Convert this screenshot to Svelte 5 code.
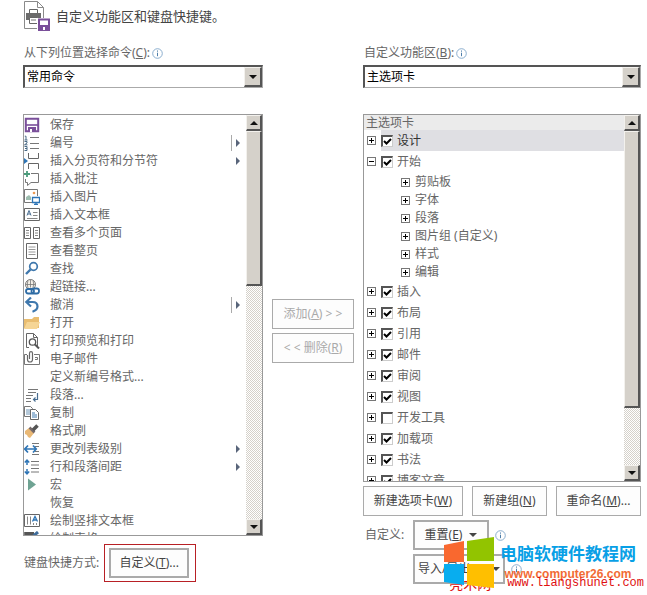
<script lang="ts">
	interface Command {
		label: string;
		icon: string;
		menu?: 'plain' | 'split';
	}

	interface Tab {
		label: string;
		checked: boolean;
		open?: boolean;
		groups?: string[];
	}

	const icons: Record<string, string> = {
		none: '',
		save: '<path d="M1.8 1.8h12.4v12.4H1.8z" fill="none" stroke="#7a4f9a" stroke-width="2"/><path d="M2 8h12" stroke="#7a4f9a" stroke-width="1.6"/><path d="M4 10h8v5H4z" fill="#7a4f9a"/><path d="M6 12h2v3H6z" fill="#fff"/>',
		numbering: '<path d="M6 2.5h9M6 8.5h9M6 13.5h9" stroke="#777" fill="none"/><path d="M.8 1.200h1.200V5M.5 5h3M.5 6.500h2.500V8L.5 9.800h3M.5 11.500h2.500v4H.5M1 13.500h2" stroke="#4a6a85" fill="none"/>',
		break: '<path d="M4.500 0v5.500h10V0M4.500 16v-5.500h10V16" fill="none" stroke="#666"/><path d="M0 5l4 3-4 3z" fill="#2e75b6"/>',
		comment: '<path d="M7 2.500h7.500v9H7l-3.500 3v-3h-2V8" fill="none" stroke="#777"/><path d="M3 0v6M0 3h6" stroke="#4b9b7b" stroke-width="1.800"/>',
		picture: '<path d="M8 13.500H.5v-13h13V7" fill="none" stroke="#777"/><path d="M2 11V8l3-2 2 2v3z" fill="#9dbdaf"/><circle cx="10" cy="4" r="1.300" fill="#ed9b54"/><path d="M8.500 8.500h7v5h-7zM12 14v2M10 15.500h4" fill="#fff" stroke="#2e75b6" stroke-width="1.300"/>',
		textbox: '<path d="M.5 1.500h15v12H.5z" fill="none" stroke="#666"/><path d="M3 8.500l2-5 2 5M3.800 7h2.600" fill="none" stroke="#486d91"/><path d="M9 5.500h4.500M9 8.500h4.500M3 11.500h10.500" stroke="#888"/>',
		pages: '<path d="M.5 2.500h6v11h-6zM9.500 2.500h6v11h-6z" fill="none" stroke="#666"/><path d="M2 5.500h3M2 8h3M2 10.500h3M11 5.500h3M11 8h3M11 10.500h3" stroke="#888"/>',
		page: '<path d="M2.500.5h11v15h-11z" fill="none" stroke="#666"/><path d="M4.500 4h7M4.500 6.500h7M4.500 9h7M4.500 11.500h7" stroke="#999"/>',
		find: '<circle cx="9.500" cy="5.500" r="3.800" fill="none" stroke="#3f78ad" stroke-width="1.700"/><path d="M6.500 8.500L2 13" stroke="#3f78ad" stroke-width="2.400"/>',
		link: '<circle cx="6.500" cy="5.500" r="5" fill="#f5f1e8" stroke="#777"/><path d="M1.500 5.500h10M6.500.5v8M4 1.500Q2.500 5 4 9M9 1.500q1.500 3.500 0 7" fill="none" stroke="#777" stroke-width=".8"/><rect x="2" y="10" width="8" height="4.500" rx="2.200" fill="#fff" stroke="#2e6ca5" stroke-width="1.800"/><rect x="7.500" y="9.500" width="7.500" height="5" rx="2.200" fill="none" stroke="#2e6ca5" stroke-width="1.800"/>',
		undo: '<path d="M3 5h5.500c4 0 5 2.500 5 4.500 0 2-1.500 4-5 5.200" fill="none" stroke="#3f78ad" stroke-width="2.200"/><path d="M7 .5L2.300 5 7 9.500" fill="none" stroke="#3f78ad" stroke-width="2.200"/>',
		open: '<path d="M0 4h8l2-2h5v11H0z" fill="#e9bd70"/><path d="M3 7h13l-3 7H0z" fill="#f5d595"/>',
		preview: '<path d="M5 14.500H2.500V.5h7l4 4V15M9.500.5v4h4" fill="none" stroke="#666"/><circle cx="8.500" cy="9" r="3.200" fill="#fff" stroke="#555" stroke-width="1.300"/><path d="M11 11.500l4 4" stroke="#555" stroke-width="2"/>',
		mail: '<path d="M3 3.500H.5v10h15v-10H10" fill="none" stroke="#777"/><path d="M3.500 4v4.500a2.500 2.500 0 0 0 5 0V2.200a1.500 1.500 0 0 0-3 0V8" fill="none" stroke="#666" stroke-width="1.200"/><path d="M11 6.500h2.500v2H11" fill="none" stroke="#777"/>',
		paragraph: '<path d="M4 2.500h10M4 5.500h8M2 8.500h7M2 11.500h5M2 14.500h5" stroke="#777"/><path d="M13.500 6v6.500H10M11.500 10.500l-2 2 2 2" fill="none" stroke="#486d91" stroke-width="1.200"/>',
		copy: '<path d="M.5 1.500h6l2 2v8h-8z" fill="#fff" stroke="#777"/><path d="M2 5h4M2 7h4M2 9h4" stroke="#6d94b5"/><path d="M6.500 4.500h5l3 3v7h-8z" fill="#fff" stroke="#666"/><path d="M8 8h3M8 10h5M8 12h5" stroke="#3f78ad"/>',
		brush: '<path d="M1 8l4-3 5 5-4 5-2-1-1-2-2-1z" fill="#e9b875"/><path d="M5.500 4.500l5 5" stroke="#766b6b" stroke-width="2.500"/><path d="M9 7l4.500-4.500" stroke="#555" stroke-width="3.500"/>',
		level: '<path d="M8 2.500h7M11 5.500h4M11 10.500h4M8 13.500h7" stroke="#777"/><path d="M1 8h11M4 4.500L.8 8 4 11.500M9 4.500L12.200 8 9 11.500" fill="none" stroke="#2e75b6" stroke-width="1.700"/>',
		spacing: '<path d="M7 2.500h8M7 6h8M7 9.500h8M7 13h8" stroke="#777"/><path d="M3 1v5M.8 3.500L3 1.200l2.200 2.300M3 10v5M.8 12.500L3 14.800l2.200-2.300" fill="none" stroke="#2e75b6" stroke-width="1.500"/>',
		macro: '<path d="M4 1.500l8 6-8 6z" fill="#6fa393"/>',
		vertical: '<path d="M.5 1.500h15v12H.5z" fill="none" stroke="#666"/><path d="M3.500 3.500v8M6.500 3.500v8" stroke="#888"/><path d="M8.500 8.500L11 3.500l2.500 5M9.300 7h3.400" fill="none" stroke="#2e75b6" stroke-width="1.300"/><path d="M9.500 10v2M12.500 10v2" stroke="#888"/>',
		table: '<path d="M0 1h10v3H0z" fill="#555"/><path d="M.5 1v14h13V9M0 8.500h8M5.500 4v11" fill="none" stroke="#777"/><path d="M7 7l7-6" stroke="#3f6c9b" stroke-width="3"/>'
	};

	const commands: Command[] = [
		{ label: '保存', icon: 'save' },
		{ label: '编号', icon: 'numbering', menu: 'split' },
		{ label: '插入分页符和分节符', icon: 'break', menu: 'plain' },
		{ label: '插入批注', icon: 'comment' },
		{ label: '插入图片', icon: 'picture' },
		{ label: '插入文本框', icon: 'textbox' },
		{ label: '查看多个页面', icon: 'pages' },
		{ label: '查看整页', icon: 'page' },
		{ label: '查找', icon: 'find' },
		{ label: '超链接...', icon: 'link' },
		{ label: '撤消', icon: 'undo', menu: 'split' },
		{ label: '打开', icon: 'open' },
		{ label: '打印预览和打印', icon: 'preview' },
		{ label: '电子邮件', icon: 'mail' },
		{ label: '定义新编号格式...', icon: 'none' },
		{ label: '段落...', icon: 'paragraph' },
		{ label: '复制', icon: 'copy' },
		{ label: '格式刷', icon: 'brush' },
		{ label: '更改列表级别', icon: 'level', menu: 'plain' },
		{ label: '行和段落间距', icon: 'spacing', menu: 'plain' },
		{ label: '宏', icon: 'macro' },
		{ label: '恢复', icon: 'none' },
		{ label: '绘制竖排文本框', icon: 'vertical' },
		{ label: '绘制表格', icon: 'table' }
	];

	let tabs: Tab[] = $state([
		{ label: '设计', checked: true },
		{ label: '开始', checked: true, open: true, groups: ['剪贴板', '字体', '段落', '图片组 (自定义)', '样式', '编辑'] },
		{ label: '插入', checked: true },
		{ label: '布局', checked: true },
		{ label: '引用', checked: true },
		{ label: '邮件', checked: true },
		{ label: '审阅', checked: true },
		{ label: '视图', checked: true },
		{ label: '开发工具', checked: false },
		{ label: '加载项', checked: true },
		{ label: '书法', checked: true },
		{ label: '博客文章', checked: true }
	]);

	let selectedTab = $state('设计');
</script>

{#snippet info()}
	<svg class="info" viewBox="0 0 11 11" aria-hidden="true">
		<circle cx="5.5" cy="5.5" r="4.8" fill="#fff" stroke="#7fa6c9" stroke-width=".9" />
		<path d="M5.500 4.700v3.500M5.500 2.500v1.200" stroke="#4f7faa" />
	</svg>
{/snippet}

{#snippet scrollbar(thumb: number)}
	<div class="scrollbar">
		<button class="scroll-button" aria-label="向上滚动"><span class="up"></span></button>
		<div class="track"><div class="thumb" style="height: {thumb}%"></div></div>
		<button class="scroll-button" aria-label="向下滚动"><span class="down"></span></button>
	</div>
{/snippet}

<main>
	<header>
		<svg class="logo" viewBox="0 0 28 32" aria-hidden="true">
			<path d="M1.500 28.500v-27h13l6 6v12M14.500 1.500v6h6M1.500 28.500H14" fill="none" stroke="#8a8a8a" />
			<path d="M6.500 14V9.500h8V14" fill="#fff" stroke="#666" />
			<path d="M3 13h15v7H3z" fill="#6b6b6b" />
			<path d="M6.500 17.500h8v6h-8z" fill="#fff" stroke="#666" />
			<path d="M8 20h5" stroke="#777" />
			<path d="M14 18h13v13H14z" fill="#fff" />
			<path d="M16 19.500h10v10.500H16z" fill="#fff" stroke="#7a4f9a" stroke-width="2" />
			<path d="M17 25h8v5h-8z" fill="#7a4f9a" />
			<path d="M20 27h2v3h-2z" fill="#fff" />
		</svg>
		<h1>自定义功能区和键盘快捷键。</h1>
	</header>

	<div class="columns">
		<section>
			<div class="caption">
				<label for="source">从下列位置选择命令(<u>C</u>):</label>{@render info()}
			</div>
			<div class="combo">
				<select id="source"><option>常用命令</option></select>
				<span class="drop"><span class="down"></span></span>
			</div>
			<div class="list commands">
				<ul>
					{#each commands as command}
						<li class="command">
							<svg class="icon" viewBox="0 0 16 16" aria-hidden="true">{@html icons[command.icon]}</svg>
							<span class="name">{command.label}</span>
							{#if command.menu}
								<span class="more" class:split={command.menu === 'split'}></span>
							{/if}
						</li>
					{/each}
				</ul>
				{@render scrollbar(40)}
			</div>
			<div class="shortcuts">
				<span>键盘快捷方式:</span>
				<div class="highlight"><button class="btn thick">自定义(<u>T</u>)...</button></div>
			</div>
		</section>

		<div class="transfer">
			<button class="btn" disabled>添加(<u>A</u>) &gt; &gt;</button>
			<button class="btn" disabled>&lt; &lt; 删除(<u>R</u>)</button>
		</div>

		<section class="ribbon">
			<div class="caption">
				<label for="target">自定义功能区(<u>B</u>):</label>{@render info()}
			</div>
			<div class="combo">
				<select id="target"><option>主选项卡</option></select>
				<span class="drop"><span class="down"></span></span>
			</div>
			<div class="list tabs">
				<div class="tree">
					<div class="tree-title">主选项卡</div>
					<ul>
						{#each tabs as tab}
							<li>
								<div class="tab">
									<button
										class="expander"
										class:open={tab.open}
										aria-label="展开 {tab.label}"
										onclick={() => (tab.open = !tab.open)}
									></button>
									<label class:selected={selectedTab === tab.label}>
										<input type="checkbox" bind:checked={tab.checked} onchange={() => (selectedTab = tab.label)} />
										{tab.label}
									</label>
								</div>
								{#if tab.open && tab.groups}
									<ul class="groups">
										{#each tab.groups as group}
											<li><button class="expander" aria-label="展开 {group}"></button>{group}</li>
										{/each}
									</ul>
								{/if}
							</li>
						{/each}
					</ul>
				</div>
				{@render scrollbar(83)}
			</div>
			<div class="edit">
				<button class="btn wide">新建选项卡(<u>W</u>)</button>
				<button class="btn">新建组(<u>N</u>)</button>
				<button class="btn medium">重命名(<u>M</u>)...</button>
			</div>
			<div class="custom">
				<span>自定义:</span>
				<div class="custom-row">
					<button class="btn thick reset"><span>重置(<u>E</u>)</span><span class="down"></span></button>{@render info()}
				</div>
				<div class="custom-row second">
					<button class="btn thick import"><span>导入/导出(<u>P</u>)</span><span class="down"></span></button>{@render info()}
				</div>
			</div>

			<div class="watermark">
				<svg viewBox="0 0 50 52" aria-hidden="true">
					<path d="M0 8l20-4v21H0z" fill="#f9682f" />
					<path d="M23 4l27-4v24H23z" fill="#92c400" />
					<path d="M0 27h20v21L0 45z" fill="#08adef" />
					<path d="M23 27h27v24l-27-3z" fill="#ffbf00" />
				</svg>
				<div class="watermark-text">
					<strong>电脑软硬件教程网</strong>
					<span>www.computer26.com</span>
				</div>
			</div>
			<div class="site-source"><span>亮术网</span><span>www.liangshunet.com</span></div>
		</section>
	</div>
</main>

<style>
	:global(body) {
		margin: 0;
		background: #fff;
	}

	main {
		box-sizing: border-box;
		min-height: 100vh;
		padding: 0 6px 11px 23px;
		font: 12px/18px "Noto Sans", "Noto Sans CJK SC", sans-serif;
		color: #666;
	}

	button, select, input {
		font: inherit;
		margin: 0;
	}

	ul {
		list-style: none;
		margin: 0;
		padding: 0;
	}

	header {
		display: flex;
		align-items: center;
		gap: 5px;
		height: 32px;
	}

	.logo {
		width: 28px;
		height: 32px;
	}

	h1 {
		margin: 0;
		font-size: 13px;
		font-weight: 400;
		color: #444;
	}

	.columns {
		display: grid;
		grid-template-columns: minmax(0, 240fr) 82px minmax(0, 278fr);
		column-gap: 9px;
		padding-top: 12px;
	}

	.caption {
		display: flex;
		align-items: center;
		gap: 2px;
		height: 18px;
		padding-left: 1px;
	}

	.info {
		width: 11px;
		height: 11px;
		flex: none;
	}

	.combo {
		display: flex;
		height: 23px;
		box-sizing: border-box;
		margin-top: 3px;
		border: 1px solid #aaa;
		border-top: 2px solid #555;
		border-left: 2px solid #555;
	}

	select {
		flex: 1;
		min-width: 0;
		padding: 0 2px;
		appearance: none;
		border: 0;
		background: #fff;
		color: #000;
	}

	.drop, .scroll-button {
		display: flex;
		align-items: center;
		justify-content: center;
		flex: none;
		box-sizing: border-box;
		width: 16px;
		background: #d5d1ca;
		border: 1px solid #f3f1ed;
		border-right: 2px solid #555;
		border-bottom: 2px solid #555;
	}

	.drop {
		width: 18px;
	}

	.down, .up {
		width: 0;
		height: 0;
		border: 4px solid transparent;
		border-top-color: #111;
		border-bottom: 0;
	}

	.up {
		border-top: 0;
		border-bottom: 4px solid #111;
	}

	.list {
		display: flex;
		box-sizing: border-box;
		margin-top: 26px;
		border: 1px solid #999;
		overflow: hidden;
	}

	.commands {
		height: 422px;
	}

	.commands > ul {
		flex: 1;
		padding-top: 1px;
	}

	.command {
		display: flex;
		align-items: center;
		height: 18px;
		padding-right: 6px;
	}

	.icon {
		width: 16px;
		height: 16px;
		flex: none;
		margin-right: 10px;
	}

	.name {
		flex: 1;
		white-space: nowrap;
	}

	.more {
		display: flex;
		align-items: center;
		height: 16px;
		padding-left: 4px;
	}

	.more.split {
		border-left: 1px solid #aaa;
	}

	.more::before {
		content: '';
		border: 4px solid transparent;
		border-left: 4px solid #59657a;
		border-right: 0;
	}

	.scrollbar {
		display: flex;
		flex-direction: column;
		flex: none;
		width: 16px;
	}

	.scroll-button {
		height: 16px;
		padding: 0;
	}

	.track {
		flex: 1;
		background: repeating-conic-gradient(#d5d1ca 0 25%, #fff 0 50%) 0 0 / 2px 2px;
	}

	.thumb {
		box-sizing: border-box;
		background: #d5d1ca;
		border: 1px solid #f3f1ed;
		border-right: 2px solid #555;
		border-bottom: 2px solid #555;
	}

	.btn {
		box-sizing: border-box;
		height: 30px;
		padding: 0;
		border: 1px solid #aaa;
		background: #fdfdfd;
		color: #444;
		white-space: nowrap;
	}

	.btn:disabled {
		color: #aaa;
	}

	.thick {
		border-width: 2px;
	}

	.shortcuts {
		display: flex;
		align-items: center;
		gap: 5px;
		margin-top: 8px;
		padding-left: 1px;
	}

	.highlight {
		padding: 3px 6px 3px 4px;
		border: 1px solid #b82025;
	}

	.highlight .btn {
		width: 80px;
	}

	.transfer {
		display: flex;
		flex-direction: column;
		gap: 4px;
		padding-top: 255px;
	}

	.ribbon {
		position: relative;
	}

	.tabs {
		height: 368px;
	}

	.tree {
		flex: 1;
	}

	.tree-title {
		height: 15px;
		padding-left: 2px;
		line-height: 16px;
		background: #ebebeb;
	}

	.tab {
		display: flex;
		align-items: center;
		height: 21px;
		padding-left: 3px;
		gap: 5px;
	}

	.tab label {
		display: flex;
		align-items: center;
		flex: 1;
		height: 21px;
		gap: 4px;
	}

	.tab .selected {
		background: #dfdfe3;
		color: #333;
	}

	input {
		appearance: none;
		box-sizing: border-box;
		width: 12px;
		height: 12px;
		border: 1px solid #ccc;
		border-top: 2px solid #555;
		border-left: 2px solid #555;
		background: #fff;
	}

	input:checked {
		background: #fff url("data:image/svg+xml,%3Csvg xmlns='http://www.w3.org/2000/svg' viewBox='0 0 9 9'%3E%3Cpath d='M1 4l2.500 2.500L8 2' fill='none' stroke='%23000' stroke-width='2'/%3E%3C/svg%3E") center / 9px 9px no-repeat;
	}

	.expander {
		display: grid;
		flex: none;
		box-sizing: border-box;
		width: 9px;
		height: 9px;
		padding: 1px;
		border: 1px solid #777;
		background: #fff;
	}

	.expander::before, .expander::after {
		content: '';
		grid-area: 1 / 1;
		place-self: center;
		width: 5px;
		height: 1px;
		background: #000;
	}

	.expander::after {
		width: 1px;
		height: 5px;
	}

	.expander.open::after {
		display: none;
	}

	.groups {
		padding-top: 1px;
	}

	.groups li {
		display: flex;
		align-items: center;
		gap: 5px;
		height: 18px;
		padding-left: 37px;
	}

	.edit {
		display: flex;
		gap: 9px;
		margin-top: 4px;
	}

	.edit .btn {
		flex: 75 1 0;
	}

	.edit .wide {
		flex-grow: 100;
	}

	.edit .medium {
		flex-grow: 85;
	}

	.custom {
		display: grid;
		grid-template-columns: 48px 1fr;
		align-items: center;
		row-gap: 4px;
		margin-top: 4px;
		padding-left: 2px;
	}

	.custom-row {
		display: flex;
		align-items: center;
		gap: 6px;
	}

	.second {
		grid-column: 2;
	}

	.reset, .import {
		display: flex;
		align-items: center;
		justify-content: center;
		gap: 7px;
		width: 76px;
	}

	.import {
		width: 92px;
	}

	.custom .down {
		border-top-color: #444;
	}

	/* site marks lie over the bottom buttons */
	.site-source {
		position: absolute;
		right: -3px;
		bottom: -8px;
		display: flex;
		gap: 16px;
		font-family: "Liberation Mono", "Noto Sans CJK SC", monospace;
		color: #e01010;
	}

	.site-source span:first-child {
		font-family: "Noto Sans CJK SC", sans-serif;
		font-size: 14px;
	}

	.watermark {
		position: absolute;
		right: 5px;
		bottom: -5px;
		display: flex;
		gap: 6px;
	}

	.watermark svg {
		position: relative;
		z-index: 1;
		width: 50px;
		height: 52px;
	}

	.watermark-text {
		display: flex;
		flex-direction: column;
		align-items: center;
		padding-top: 6px;
	}

	.watermark strong {
		font-size: 17px;
		line-height: 22px;
		color: #08a0e6;
	}

	.watermark-text span {
		font: bold 12px/18px "Liberation Sans", sans-serif;
		color: #f26b35;
	}
</style>
